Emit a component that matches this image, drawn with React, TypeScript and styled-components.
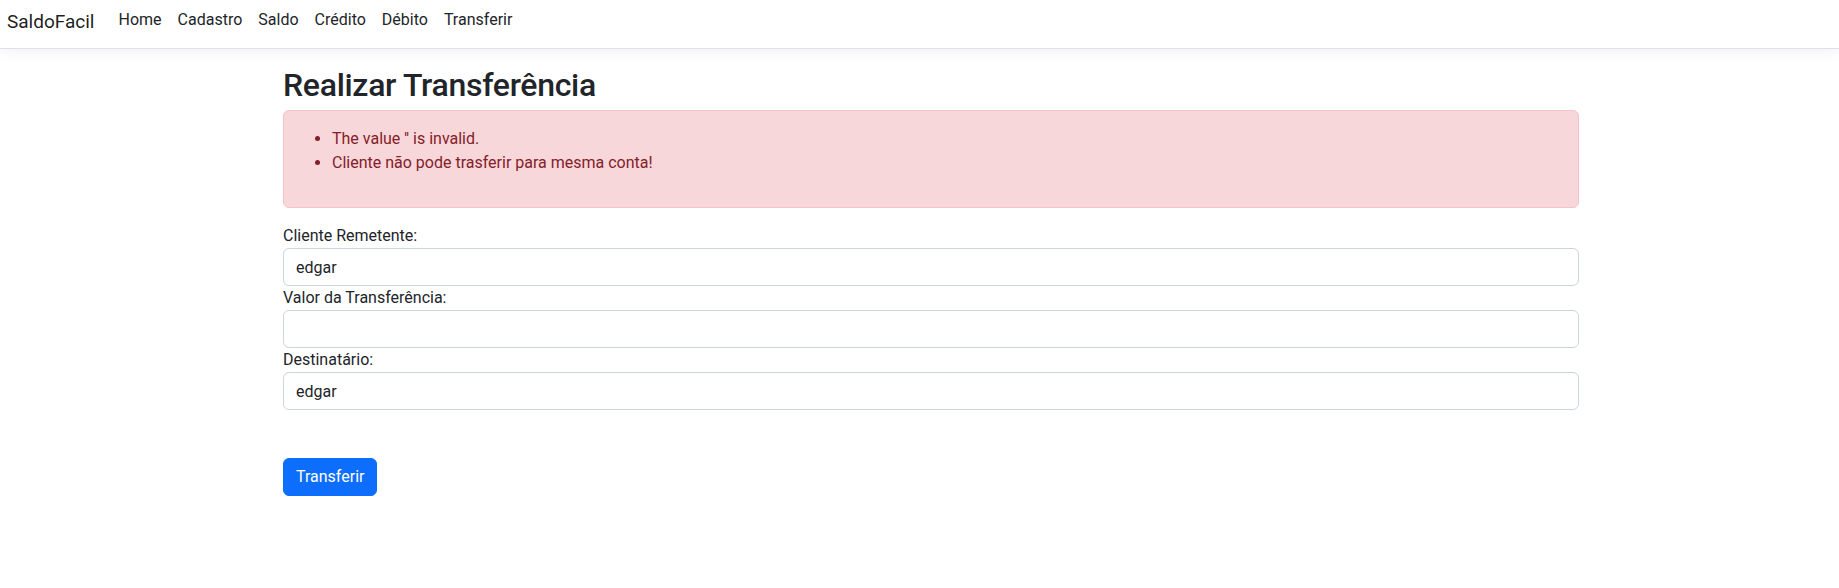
import React from "react";
import styled, { createGlobalStyle } from "styled-components";

const Global = createGlobalStyle`
  *, *::before, *::after { box-sizing: border-box; }
  html, body { margin: 0; padding: 0; background: #fff; }
  body {
    font-family: "Segoe UI", Roboto, "Noto Sans", "Liberation Sans", sans-serif;
    font-size: 16px;
    line-height: 1.5;
    color: #212529;
  }
`;

const NavBar = styled.nav`
  display: flex;
  align-items: flex-start;
  height: 49px;
  padding: 8px 7px 0;
  background: #fff;
  border-bottom: 1px solid #dee2e6;
  box-shadow: 0 4px 12px rgba(0, 0, 0, 0.05);
  margin-bottom: 17px;
`;

const Brand = styled.a`
  font-size: 19px;
  line-height: 28px;
  color: rgba(0, 0, 0, 0.9);
  text-decoration: none;
  margin-right: 16px;
`;

const NavList = styled.ul`
  display: flex;
  list-style: none;
  margin: 0;
  padding: 0;
`;

const NavLink = styled.a`
  display: block;
  padding: 0 8px;
  font-size: 16px;
  line-height: 24px;
  color: #212529;
  text-decoration: none;
`;

const Main = styled.main`
  padding-left: 23px;
`;

const Container = styled.div`
  max-width: 1296px;
  margin: 0 auto;
`;

const Title = styled.h2`
  margin: 2px 0 6px;
  font-size: 32px;
  font-weight: 500;
  line-height: 1.2;
  letter-spacing: -0.3px;
  color: #212529;
`;

const Alert = styled.div`
  padding: 16px;
  margin-bottom: 16px;
  background: #f8d7da;
  border: 1px solid #f5c2c7;
  border-radius: 6px;
  color: #842029;
`;

const ErrorList = styled.ul`
  margin: 0 0 16px;
  padding-left: 32px;
`;

const Form = styled.form`
  display: flex;
  flex-direction: column;
`;

const Label = styled.label`
  display: block;
  line-height: 24px;
`;

const Input = styled.input`
  display: block;
  width: 100%;
  height: 38px;
  padding: 6px 12px;
  font: inherit;
  line-height: 24px;
  color: #212529;
  background: #fff;
  border: 1px solid #ced4da;
  border-radius: 6px;
  outline: none;
`;

const Button = styled.button`
  align-self: flex-start;
  margin-top: 48px;
  padding: 6px 12px;
  font: inherit;
  line-height: 24px;
  color: #fff;
  background: #0d6efd;
  border: 1px solid #0d6efd;
  border-radius: 6px;
  cursor: pointer;
`;

const links = ["Home", "Cadastro", "Saldo", "Crédito", "Débito", "Transferir"];

export default function App() {
  return (
    <>
      <Global />
      <NavBar>
        <Brand href="#">SaldoFacil</Brand>
        <NavList>
          {links.map((l) => (
            <li key={l}>
              <NavLink href="#">{l}</NavLink>
            </li>
          ))}
        </NavList>
      </NavBar>
      <Main>
        <Container>
          <Title>Realizar Transferência</Title>
          <Alert>
            <ErrorList>
              <li>The value '' is invalid.</li>
              <li>Cliente não pode trasferir para mesma conta!</li>
            </ErrorList>
          </Alert>
          <Form onSubmit={(e) => e.preventDefault()}>
            <Label htmlFor="rem">Cliente Remetente:</Label>
            <Input id="rem" defaultValue="edgar" />
            <Label htmlFor="val">Valor da Transferência:</Label>
            <Input id="val" defaultValue="" />
            <Label htmlFor="dest">Destinatário:</Label>
            <Input id="dest" defaultValue="edgar" />
            <Button type="submit">Transferir</Button>
          </Form>
        </Container>
      </Main>
    </>
  );
}
